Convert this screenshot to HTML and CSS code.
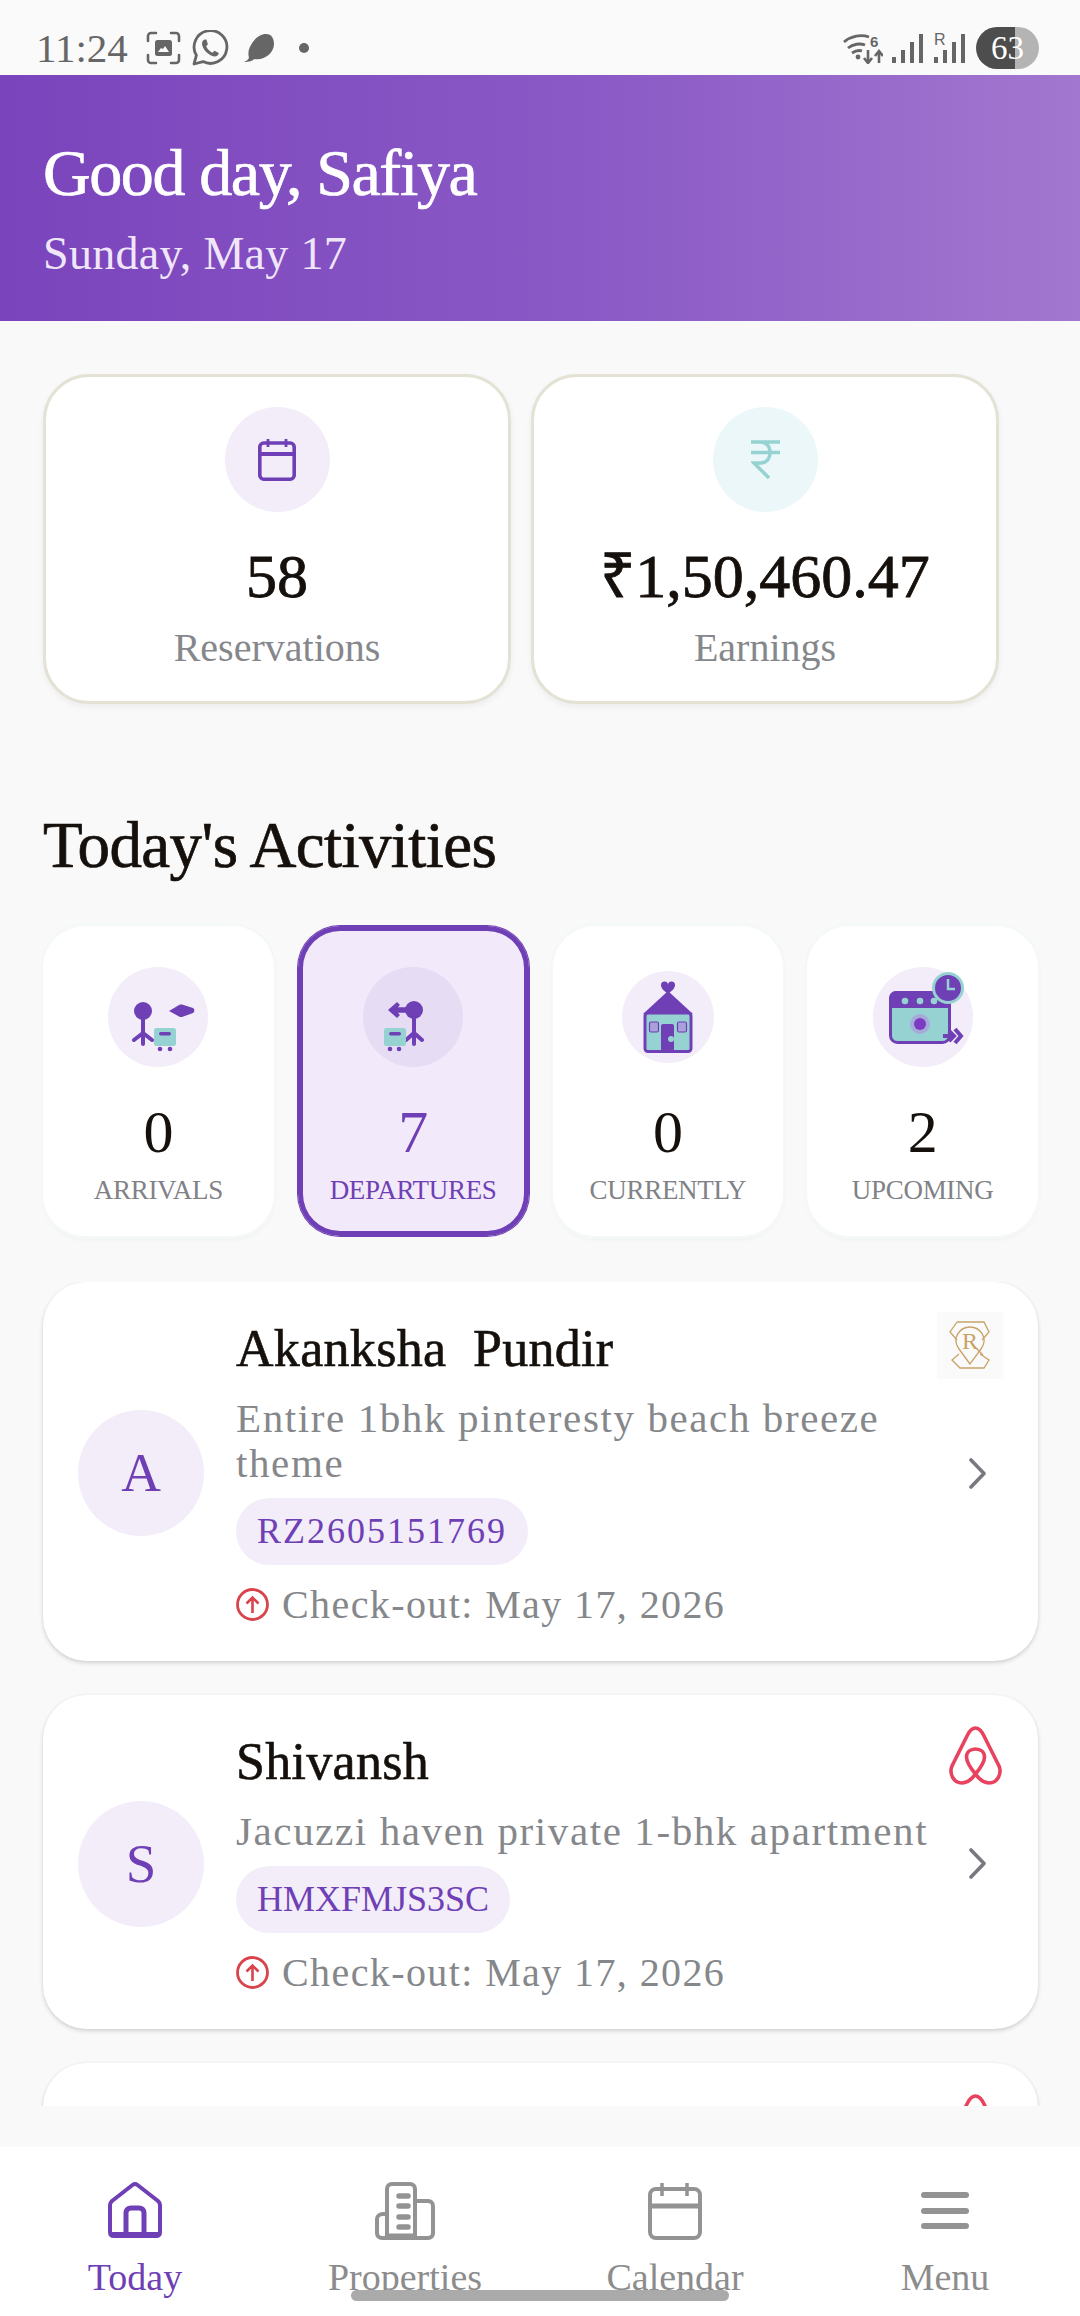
FILE: index.html
```html
<!DOCTYPE html>
<html>
<head>
	<meta charset="utf-8">
	<meta name="viewport" content="width=device-width, initial-scale=1">
	<title>Today</title>
	<link rel="stylesheet" href="styles.css">
</head>
<body>

<div class="statusbar">
	<span class="time">11:24</span>
	<svg class="st-shot" viewBox="0 0 35 34"><path d="M2 10V5a3 3 0 0 1 3-3h5M25 2h5a3 3 0 0 1 3 3v5M33 24v5a3 3 0 0 1-3 3h-5M10 32H5a3 3 0 0 1-3-3v-5" fill="none" stroke="#666" stroke-width="2.6" stroke-linecap="round"/><rect x="9" y="9" width="17" height="16" rx="2.5" fill="#666"/><path d="M12 21l3-4 2 1 2-3 4 6z" fill="#fafafa"/></svg>
	<svg class="st-wa" viewBox="0 0 37 36"><path d="M2 34l2.400-8.600A16.400 16.400 0 1 1 11 31.600z" fill="none" stroke="#666" stroke-width="2.800" stroke-linejoin="round"/><path d="M13 9.500c-1.500 0-3 1.700-3 4 0 5.500 7 12.500 12.500 13 2.300 0 4.300-1.700 4.300-3.500l-4.300-2.300-2 2c-2.500-1-5.500-4-6.300-6.500l1.700-2-1.500-4.700z" fill="#666"/></svg>
	<svg class="st-leaf" viewBox="0 0 32 30"><path d="M1 29c2-1 4-2 5-4-1-4-1-8 2-13C11 6 17 1 23 1c6 0 8 5 8 10 0 9-10 17-20 15-1 2-5 3-10 3z" fill="#666"/></svg>
	<span class="st-dot"></span>
	<span class="st-right">
		<svg class="st-wifi" viewBox="0 0 40 31"><path d="M1 9c7-6 17-8 25-5M5 15c5-4 12-5 17-3M9 20c3-2 7-3 10-2" fill="none" stroke="#666" stroke-width="2.800"/><circle cx="15" cy="24" r="2.400" fill="#666"/><path d="M25 17v12M21 25l4 5 4-5M36 30V19M32 23l4-5 4 5" fill="none" stroke="#666" stroke-width="2.600"/><text x="27" y="14" class="st-six">6</text></svg>
		<span class="bars">
			<i class="b1"></i><i class="b2"></i><i class="b3"></i><i class="b4"></i>
		</span>
		<span class="bars bars-r">
			<b>R</b>
			<i class="b1"></i><i class="b2"></i><i class="b3"></i><i class="b4"></i>
		</span>
		<span class="battery">63</span>
	</span>
</div>

<div class="header">
	<h1>Good day, Safiya</h1>
	<p>Sunday, May 17</p>
</div>

<div class="stats">
	<div class="stat">
		<div class="stat-icon">
			<svg width="38" height="43" viewBox="0 0 38 43"><rect x="1.800" y="5" width="34.400" height="36.200" rx="4" fill="none" stroke="#6f3fb5" stroke-width="3.600"/><path d="M1.500 16h35" stroke="#6f3fb5" stroke-width="4"/><path d="M10 1v8M28 1v8" stroke="#6f3fb5" stroke-width="2.800"/></svg>
		</div>
		<div class="stat-value">58</div>
		<div class="stat-label">Reservations</div>
	</div>
	<div class="stat">
		<div class="stat-icon stat-icon-teal">
			<svg width="29" height="39" viewBox="0 0 29 39"><path d="M0 2h29M0 12.500h29M3 2h6c6 0 10 4 10 10.500S15 23 9 23H3l15 15" fill="none" stroke="#96d2d2" stroke-width="3.500"/></svg>
		</div>
		<div class="stat-value">₹1,50,460.47</div>
		<div class="stat-label">Earnings</div>
	</div>
</div>

<h2 class="section-title">Today's Activities</h2>

<div class="activities">
	<div class="activity">
		<div class="activity-icon">
			<svg width="100" height="100" viewBox="0 0 100 100">
				<circle cx="35" cy="44" r="9" fill="#6f3fb5"/>
				<path d="M35 50v27M26 73l9-7 9 7" fill="none" stroke="#6f3fb5" stroke-width="4" stroke-linecap="round"/>
				<path d="M61 44l11-6.500h2L85 41a3 3 0 0 1 0 5l-11 4h-2z" fill="#6f3fb5"/>
				<rect x="46" y="61" width="22" height="18" rx="2.500" fill="#96d2d2"/><rect x="51" y="65" width="12" height="3.600" rx="1.800" fill="#6f3fb5"/><circle cx="52" cy="82" r="2.300" fill="#6f3fb5"/><circle cx="62" cy="82" r="2.300" fill="#6f3fb5"/>
			</svg>
		</div>
		<div class="activity-num">0</div>
		<div class="activity-label">ARRIVALS</div>
	</div>
	<div class="activity active">
		<div class="activity-icon">
			<svg width="100" height="100" viewBox="0 0 100 100">
				<circle cx="51" cy="43" r="9" fill="#6f3fb5"/>
				<path d="M51 50v27M43 73l8-7 8 7" fill="none" stroke="#6f3fb5" stroke-width="4" stroke-linecap="round"/>
				<path d="M26 43l8-7 2 2-3 3h10v4H33l3 3-2 2z" fill="#6f3fb5" stroke="#6f3fb5" stroke-width="1.500" stroke-linejoin="round"/>
				<rect x="21" y="61" width="22" height="18" rx="2.500" fill="#96d2d2"/><rect x="26" y="65" width="12" height="3.600" rx="1.800" fill="#6f3fb5"/><circle cx="27" cy="82" r="2.300" fill="#6f3fb5"/><circle cx="36" cy="82" r="2.300" fill="#6f3fb5"/>
			</svg>
		</div>
		<div class="activity-num">7</div>
		<div class="activity-label">DEPARTURES</div>
	</div>
	<div class="activity">
		<div class="activity-icon activity-icon-small">
			<svg width="52" height="72" viewBox="0 0 52 72">
				<path d="M26 13c-5-4-7-6-7-9a3.500 3.500 0 0 1 7 0 3.500 3.500 0 0 1 7 0c0 3-2 5-7 9z" fill="#6f3fb5"/>
				<path d="M26 10L51 33H1z" fill="#6f3fb5"/>
				<rect x="3" y="32" width="46" height="38.500" rx="3" fill="#96d2d2" stroke="#6f3fb5" stroke-width="3"/>
				<rect x="7.500" y="41" width="9" height="10" rx="1.500" fill="#a9a0dc" stroke="#6f3fb5" stroke-width="1.200"/><rect x="35.500" y="41" width="9" height="10" rx="1.500" fill="#a9a0dc" stroke="#6f3fb5" stroke-width="1.200"/>
				<rect x="19" y="43" width="13" height="27" rx="2" fill="#6f3fb5"/><circle cx="29" cy="58" r="3" fill="#96d2d2"/>
			</svg>
		</div>
		<div class="activity-num">0</div>
		<div class="activity-label">CURRENTLY</div>
	</div>
	<div class="activity">
		<div class="activity-icon activity-icon-upcoming">
			<svg width="100" height="100" viewBox="0 0 100 100">
				<rect x="17.500" y="25.500" width="59" height="50" rx="7" fill="#96d2d2" stroke="#6f3fb5" stroke-width="3"/>
				<path d="M16 41V31a7 7 0 0 1 7-7h48a7 7 0 0 1 7 7v10z" fill="#6f3fb5"/>
				<circle cx="32" cy="34" r="3.300" fill="#96d2d2"/><circle cx="47" cy="34" r="3.300" fill="#96d2d2"/><circle cx="61" cy="34" r="3.300" fill="#96d2d2"/>
				<circle cx="47" cy="57" r="10" fill="#a9a0dc" opacity=".8"/><circle cx="47" cy="57" r="6" fill="#7d3bc4"/>
				<path d="M70 69h10M76 64l5 5-5 5M82 62l6 7-6 7" fill="none" stroke="#6f3fb5" stroke-width="4"/>
				<circle cx="75" cy="21" r="14.500" fill="#6f3fb5" stroke="#96d2d2" stroke-width="3"/><path d="M75 12v10h7" fill="none" stroke="#96d2d2" stroke-width="2.500"/>
			</svg>
		</div>
		<div class="activity-num">2</div>
		<div class="activity-label">UPCOMING</div>
	</div>
</div>

<div class="list">
	<div class="booking">
		<div class="avatar">A</div>
		<div class="booking-body">
			<div class="guest">Akanksha&nbsp; Pundir</div>
			<div class="listing">Entire 1bhk pinteresty beach breeze theme</div>
			<span class="code code-digits">RZ2605151769</span>
			<div class="checkout">
				<svg width="33" height="33" viewBox="0 0 33 33"><circle cx="16.500" cy="16.500" r="15" fill="none" stroke="#d9434b" stroke-width="2.800"/><path d="M16.500 25V10M10.500 15.500l6-6 6 6" fill="none" stroke="#d9434b" stroke-width="2.600"/></svg>
				<span>Check-out: May 17, 2026</span>
			</div>
		</div>
		<svg class="chevron" width="19" height="31" viewBox="0 0 19 31"><path d="M3 2l13 13.500L3 29" fill="none" stroke="#77797f" stroke-width="3.600" stroke-linecap="round" stroke-linejoin="round"/></svg>
		<div class="logo-box">
			<svg width="66" height="67" viewBox="0 0 66 67" fill="none" stroke="#c9a267" stroke-width="1.300">
				<path d="M20 10h27l5 10-7 8M20 10l-7 10 7 8"/>
				<path d="M22 42l-7 6 8 8h24l5-8-9-6"/>
				<path d="M33 52L22 37c-8-11 1-22 11-22s19 11 11 22z"/>
				<text x="33" y="37" class="logo-r">R</text>
				<path d="M35 32l11 11"/>
			</svg>
		</div>
	</div>
	<div class="booking">
		<div class="avatar">S</div>
		<div class="booking-body">
			<div class="guest">Shivansh</div>
			<div class="listing">Jacuzzi haven private 1-bhk apartment</div>
			<span class="code">HMXFMJS3SC</span>
			<div class="checkout">
				<svg width="33" height="33" viewBox="0 0 33 33"><circle cx="16.500" cy="16.500" r="15" fill="none" stroke="#d9434b" stroke-width="2.800"/><path d="M16.500 25V10M10.500 15.500l6-6 6 6" fill="none" stroke="#d9434b" stroke-width="2.600"/></svg>
				<span>Check-out: May 17, 2026</span>
			</div>
		</div>
		<svg class="chevron" width="19" height="31" viewBox="0 0 19 31"><path d="M3 2l13 13.500L3 29" fill="none" stroke="#77797f" stroke-width="3.600" stroke-linecap="round" stroke-linejoin="round"/></svg>
		<svg class="airbnb" width="55" height="59" viewBox="0 0 55 59"><path d="M27.500 2c-4 0-6 3-8 7L4 40c-3 7 1 17 10 17 6 0 10-4 13.500-9C31 53 35 57 41 57c9 0 13-10 10-17L35.500 9c-2-4-4-7-8-7zM27.500 48c-5-6-9-12-9-17 0-5 4-8 9-8s9 3 9 8c0 5-4 11-9 17z" fill="none" stroke="#e8425f" stroke-width="3.600"/></svg>
	</div>
	<div class="booking booking-cut">
		<svg class="airbnb" width="55" height="59" viewBox="0 0 55 59"><path d="M27.500 2c-4 0-6 3-8 7L4 40c-3 7 1 17 10 17 6 0 10-4 13.500-9C31 53 35 57 41 57c9 0 13-10 10-17L35.500 9c-2-4-4-7-8-7zM27.500 48c-5-6-9-12-9-17 0-5 4-8 9-8s9 3 9 8c0 5-4 11-9 17z" fill="none" stroke="#e8425f" stroke-width="3.600"/></svg>
	</div>
</div>

<div class="bottomnav">
	<div class="nav-item nav-active">
		<svg width="54" height="58" viewBox="0 0 54 58" fill="none" stroke="#6f3fb5" stroke-width="4"><path d="M24.500 3L4 19c-1 1-2 2-2 4v27c0 3 1 4 4 4h42c3 0 4-1 4-4V23c0-2-1-3-2-4L29.500 3c-2-1.500-3-1.500-5 0z" stroke-linejoin="round"/><path d="M18 54V31c0-3 2-5 5-5h8c3 0 5 2 5 5v23" stroke-width="5"/><path d="M2 52h50" stroke-width="4"/></svg>
		<span>Today</span>
	</div>
	<div class="nav-item">
		<svg width="60" height="58" viewBox="0 0 60 58" fill="none" stroke="#939393" stroke-width="4"><path d="M12 56V7c0-3 2-5 5-5h18c3 0 5 2 5 5v49"/><path d="M12 32H8c-3 0-6 2-6 5v14c0 3 2 5 5 5h46c3 0 5-2 5-5V24c0-3-2-5-5-5H40"/><path d="M12 54h28" stroke-width="5"/><path d="M24 14h9M24 24h9M24 35h9M24 45h9" stroke-width="5.500" stroke-linecap="round"/></svg>
		<span>Properties</span>
	</div>
	<div class="nav-item">
		<svg width="54" height="58" viewBox="0 0 54 58" fill="none" stroke="#939393" stroke-width="4"><rect x="2" y="7" width="50" height="49" rx="6"/><path d="M2 24h50" stroke-width="5"/><path d="M14 1v13M39 1v13" stroke-width="3.500"/></svg>
		<span>Calendar</span>
	</div>
	<div class="nav-item">
		<svg width="48" height="58" viewBox="0 0 48 58" fill="none" stroke="#939393" stroke-width="6" stroke-linecap="round"><path d="M3 13h42M3 29h42M3 44h42"/></svg>
		<span>Menu</span>
	</div>
	<div class="gesture"></div>
</div>

</body>
</html>
```

FILE: styles.css
```css
body {
	font-family: "Liberation Serif", serif;
	margin: 0;
	padding: 0;
	width: 1080px;
	height: 2316px;
	overflow: hidden;
	background-color: #f9f9f9;
	color: #15100c;
	display: flex;
	flex-direction: column;
}

/* status bar */
.statusbar {
	height: 75px;
	padding: 21px 41px 0 36px;
	box-sizing: border-box;
	display: flex;
	align-items: center;
	background-color: #fafafa;
	color: #666;
}
.time {
	font-size: 41px;
	line-height: 40px;
	margin-right: 18px;
}
.st-shot {
	width: 35px;
	height: 34px;
	margin-right: 11px;
}
.st-wa {
	width: 37px;
	height: 36px;
	margin-right: 14px;
}
.st-leaf {
	width: 32px;
	height: 30px;
	margin-right: 24px;
}
.st-dot {
	width: 10px;
	height: 10px;
	border-radius: 50%;
	background-color: #666;
}
.st-right {
	margin-left: auto;
	display: flex;
	align-items: center;
}
.st-wifi {
	width: 40px;
	height: 31px;
	margin-right: 9px;
}
.st-six {
	font-family: "Liberation Sans", sans-serif;
	font-size: 15px;
	font-weight: bold;
	fill: #666;
}
.bars {
	display: flex;
	align-items: flex-end;
	gap: 5px;
	height: 29px;
	margin-right: 11px;
	position: relative;
}
.bars i {
	display: block;
	width: 4px;
	background-color: #666;
}
.bars .b1 { height: 6px; }
.bars .b2 { height: 13px; }
.bars .b3 { height: 21px; }
.bars .b4 { height: 29px; }
.bars b {
	position: absolute;
	left: 0;
	top: -2px;
	font-family: "Liberation Sans", sans-serif;
	font-size: 16px;
	font-weight: normal;
	line-height: 16px;
	color: #666;
}
.battery {
	width: 63px;
	height: 42px;
	border-radius: 21px;
	background: linear-gradient(90deg, #4d4d4d 62%, #b4b4b4 62%);
	color: #fff;
	font-size: 33px;
	line-height: 42px;
	text-align: center;
}

/* header */
.header {
	height: 246px;
	box-sizing: border-box;
	padding: 63px 43px 0;
	background: linear-gradient(90deg, #7a44bc 0%, #8b5ac6 55%, #a277cf 100%);
	color: #fff;
}
.header h1 {
	margin: 0;
	font-size: 66px;
	line-height: 70px;
	font-weight: normal;
	letter-spacing: -1.4px;
	-webkit-text-stroke: 0.7px #fff;
}
.header p {
	margin: 21px 0 0;
	font-size: 46px;
	line-height: 50px;
	letter-spacing: 0.3px;
	color: #f0e6fa;
}

/* top stats */
.stats {
	display: flex;
	gap: 20px;
	padding: 53px 0 0 43px;
}
.stat {
	width: 468px;
	height: 330px;
	box-sizing: border-box;
	padding-top: 30px;
	background-color: #fff;
	border: 3px solid #e4e2d5;
	border-radius: 46px;
	box-shadow: 0 3px 6px rgba(0, 0, 0, 0.05);
	display: flex;
	flex-direction: column;
	align-items: center;
}
.stat-icon {
	width: 105px;
	height: 105px;
	border-radius: 50%;
	background-color: #f2edf8;
	display: flex;
	align-items: center;
	justify-content: center;
}
.stat-icon-teal {
	background-color: #ecf7fa;
}
.stat-value {
	margin-top: 29px;
	font-size: 62px;
	line-height: 70px;
	font-weight: normal;
	-webkit-text-stroke: 0.8px #15100c;
}
.stat-label {
	margin-top: 15px;
	font-size: 40px;
	line-height: 44px;
	color: #85878b;
}

/* activities */
.section-title {
	margin: 103px 0 0 43px;
	font-size: 65px;
	line-height: 76px;
	font-weight: normal;
	letter-spacing: -0.6px;
	-webkit-text-stroke: 0.7px #15100c;
}
.activities {
	display: flex;
	gap: 24px;
	padding: 0 42px 0 43px;
	margin-top: 43px;
}
.activity {
	flex: 1;
	height: 310px;
	box-sizing: border-box;
	padding-top: 41px;
	background-color: #fff;
	border-radius: 42px;
	box-shadow: 0 0 0 3px #f5f8f9, 0 3px 5px rgba(0, 0, 0, 0.06);
	display: flex;
	flex-direction: column;
	align-items: center;
}
.activity.active {
	background-color: #f2eafa;
	box-shadow: inset 0 0 0 5px #6f3fb5, 0 0 0 1px #6f3fb5;
	color: #6f3fb5;
}
.activity-icon {
	width: 100px;
	height: 100px;
	border-radius: 50%;
	background-color: #f2edf8;
	display: flex;
	align-items: center;
	justify-content: center;
}
.active .activity-icon {
	background-color: #e6dcf3;
}
.activity-icon-small {
	width: 92px;
	height: 92px;
	margin: 4px 0;
}
.activity-num {
	margin-top: 30px;
	font-size: 60px;
	line-height: 70px;
}
.activity-label {
	margin-top: 7px;
	font-size: 27px;
	line-height: 32px;
	letter-spacing: -0.3px;
	color: #808286;
}
.active .activity-label {
	color: #6f3fb5;
}

/* booking list */
.list {
	height: 824px;
	margin-top: 46px;
	padding: 0 42px 0 43px;
	overflow: hidden;
	display: flex;
	flex-direction: column;
	gap: 34px;
	box-sizing: border-box;
}
.booking {
	flex-shrink: 0;
	position: relative;
	display: flex;
	align-items: center;
	padding: 37px 51px 34px 35px;
	background-color: #fff;
	border-radius: 44px;
	box-shadow: 0 2px 4px rgba(0, 0, 0, 0.16), 0 0 3px rgba(0, 0, 0, 0.03);
}
.booking-cut {
	height: 200px;
}
.avatar {
	width: 126px;
	height: 126px;
	flex-shrink: 0;
	border-radius: 50%;
	background-color: #f2edf8;
	color: #6f3fb5;
	font-size: 55px;
	line-height: 126px;
	text-align: center;
	margin-right: 32px;
}
.booking-body {
	flex: 1;
	min-width: 0;
}
.guest {
	font-size: 52px;
	line-height: 60px;
	letter-spacing: 0.3px;
	-webkit-text-stroke: 0.6px #15100c;
}
.listing {
	margin-top: 17px;
	font-size: 41px;
	line-height: 45px;
	letter-spacing: 1.6px;
	color: #85878b;
}
.code {
	display: inline-block;
	margin-top: 12px;
	height: 67px;
	padding: 0 21px;
	border-radius: 34px;
	background-color: #f2edf8;
	color: #6f3fb5;
	font-size: 36px;
	line-height: 67px;
	vertical-align: top;
}
.code-digits {
	letter-spacing: 2px;
}
.checkout {
	display: flex;
	align-items: center;
	gap: 13px;
	margin-top: 17px;
	font-size: 40px;
	line-height: 45px;
	letter-spacing: 1.4px;
	color: #85878b;
}
.chevron {
	flex-shrink: 0;
}
.logo-box {
	position: absolute;
	top: 30px;
	right: 35px;
	width: 66px;
	height: 67px;
	background-color: #fafafa;
}
.logo-r {
	font-size: 24px;
	fill: #c9a267;
	stroke: none;
	text-anchor: middle;
}
.airbnb {
	position: absolute;
	top: 31px;
	right: 35px;
}

/* bottom nav */
.bottomnav {
	position: relative;
	margin-top: 41px;
	flex: 1;
	background-color: #fff;
	display: grid;
	grid-template-columns: repeat(4, 1fr);
	padding-top: 35px;
	box-sizing: border-box;
}
.nav-item {
	display: flex;
	flex-direction: column;
	align-items: center;
	font-size: 38px;
	line-height: 42px;
	color: #8c8c8c;
}
.nav-item svg {
	margin-bottom: 16px;
}
.nav-active {
	color: #6f3fb5;
}
.gesture {
	position: absolute;
	left: 351px;
	top: 143px;
	width: 378px;
	height: 11px;
	border-radius: 6px;
	background-color: #aaa;
}
```
